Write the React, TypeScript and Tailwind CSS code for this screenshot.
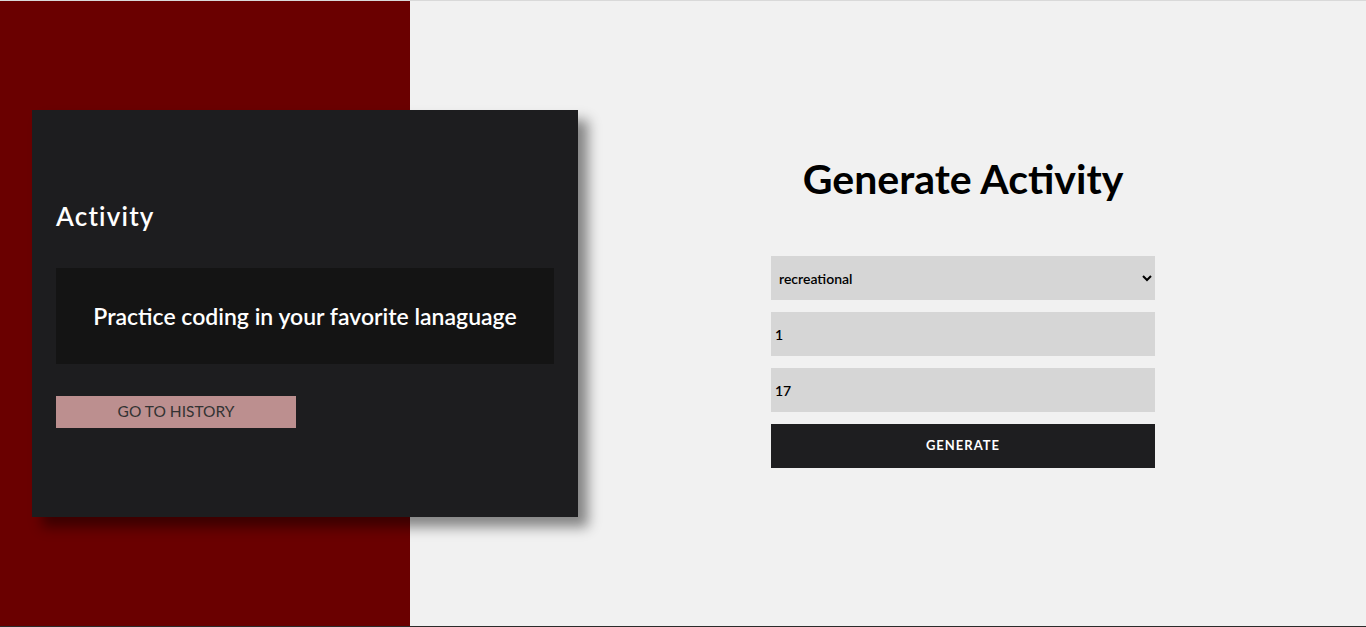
import React, { useState } from 'react';

const font = { fontFamily: 'Lato, "Open Sans", sans-serif' };

const ActivityCard: React.FC<{ text: string }> = ({ text }) => (
  <div className="relative z-10 ml-[32px] flex h-[407px] w-[546px] shrink-0 flex-col justify-center bg-[#1d1d1f] px-6 pb-[2px] shadow-[10px_10px_12px_rgba(0,0,0,0.45)]">
    <h2 className="text-[26px] font-semibold tracking-[1.2px] text-white">Activity</h2>
    <div className="mt-[32px] flex h-[96px] items-center justify-center bg-[#141414]">
      <p className="text-[23px] font-semibold text-white">{text}</p>
    </div>
    <button className="mt-[32px] h-[32px] w-[240px] bg-[#bc8f8f] text-[15.5px] text-[#333]">
      GO TO HISTORY
    </button>
  </div>
);

export default function App() {
  const [type, setType] = useState('recreational');
  const [participants, setParticipants] = useState('1');
  const [price, setPrice] = useState('17');

  return (
    <div style={font} className="flex h-[627px] w-full flex-col overflow-hidden">
      <div className="h-px w-full bg-[#d9d9d9]" />
      <div className="flex flex-1">
        {/* Left red column with overlapping card */}
        <div className="flex w-[410px] shrink-0 items-center bg-[#6a0000]">
          <ActivityCard text="Practice coding in your favorite lanaguage" />
        </div>

        {/* Right form column */}
        <div className="flex flex-1 flex-col items-center bg-[#f1f1f1] pl-[150px] pt-[152px]">
          <h1 className="text-[41px] font-bold leading-[52px] text-black">Generate Activity</h1>
          <form className="mt-[51px] flex w-[384px] flex-col gap-3" onSubmit={(e) => e.preventDefault()}>
            <select
              value={type}
              onChange={(e) => setType(e.target.value)}
              className="h-[44px] w-full bg-[#d6d6d6] px-[4px] text-[14px] font-semibold text-black outline-none"
            >
              <option value="education">education</option>
              <option value="recreational">recreational</option>
              <option value="social">social</option>
              <option value="diy">diy</option>
              <option value="charity">charity</option>
              <option value="cooking">cooking</option>
              <option value="relaxation">relaxation</option>
              <option value="music">music</option>
              <option value="busywork">busywork</option>
            </select>
            <input
              value={participants}
              onChange={(e) => setParticipants(e.target.value)}
              className="h-[44px] w-full bg-[#d6d6d6] px-[4px] text-[14px] font-semibold text-black outline-none"
            />
            <input
              value={price}
              onChange={(e) => setPrice(e.target.value)}
              className="h-[44px] w-full bg-[#d6d6d6] px-[4px] text-[14px] font-semibold text-black outline-none"
            />
            <button className="h-[44px] w-full bg-[#1e1e20] text-[13px] font-bold tracking-[1px] text-white">
              GENERATE
            </button>
          </form>
        </div>
      </div>
      <div className="h-px w-full bg-[#2b2b2b]" />
    </div>
  );
}
